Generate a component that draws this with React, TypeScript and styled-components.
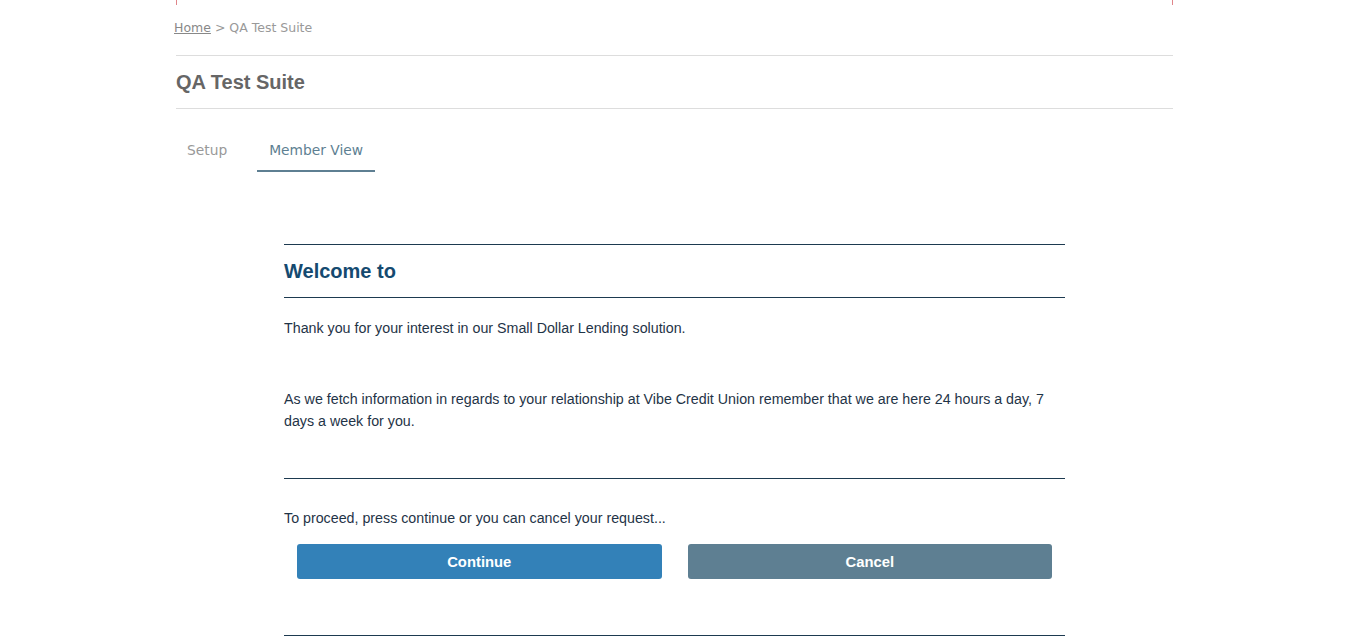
import React from "react";
import styled, { createGlobalStyle } from "styled-components";

const GlobalStyle = createGlobalStyle`
  html, body {
    margin: 0;
    padding: 0;
    background: #fff;
  }
  body {
    font-family: "Liberation Sans", Arial, sans-serif;
  }
`;

const Frame = styled.div`
  width: 1349px;
  min-height: 643px;
`;

const Container = styled.div`
  width: 997px;
  margin: 0 auto;
`;

const TopEdge = styled.div`
  height: 5px;
  border-left: 1px solid #e0858a;
  border-right: 1px solid #e0858a;
`;

const Breadcrumb = styled.div`
  font-family: "DejaVu Sans", Verdana, sans-serif;
  font-size: 12.5px;
  line-height: 18px;
  color: #999;
  padding: 14px 0 18px;
  margin-left: -2px;

  a {
    color: #888;
    text-decoration: underline;
  }
`;

const TitleBar = styled.div`
  border-top: 1px solid #ddd;
  border-bottom: 1px solid #ddd;
  height: 52px;
  display: flex;
  align-items: center;
`;

const Title = styled.h1`
  margin: 0;
  font-size: 20px;
  font-weight: bold;
  color: #666;
  line-height: 24px;
`;

const Tabs = styled.div`
  display: flex;
  gap: 18px;
  margin-top: 21px;
  margin-left: -1px;
`;

const Tab = styled.div<{ $active?: boolean }>`
  font-family: "DejaVu Sans", Verdana, sans-serif;
  font-size: 13.8px;
  line-height: 18px;
  padding: 11px 12px 11px;
  color: ${({ $active }) => ($active ? "#5e7f92" : "#999")};
  border-bottom: 2px solid ${({ $active }) => ($active ? "#5e7f92" : "transparent")};
`;

const Panel = styled.div`
  width: 781px;
  margin: 72px auto 0;
  color: #1f3447;
  font-size: 14.25px;
  line-height: 22px;
`;

const HeadingBlock = styled.div`
  border-top: 1px solid #1d3a50;
  border-bottom: 1px solid #1d3a50;
  height: 52px;
  display: flex;
  align-items: center;
`;

const Heading = styled.h2`
  margin: 0;
  font-size: 20px;
  font-weight: bold;
  color: #154a70;
  line-height: 24px;
`;

const Para = styled.p<{ $top: number }>`
  margin: ${({ $top }) => $top}px 0 0;
`;

const Divider = styled.div<{ $top: number }>`
  border-top: 1px solid #1d3a50;
  margin-top: ${({ $top }) => $top}px;
`;

const Actions = styled.div`
  display: grid;
  grid-template-columns: 1fr 1fr;
  margin-top: 15px;
`;

const Cell = styled.div`
  padding: 0 13px;
`;

const Button = styled.button<{ $variant: "primary" | "secondary" }>`
  width: 100%;
  height: 35px;
  padding: 1px 0 0;
  border: none;
  border-radius: 3px;
  background: ${({ $variant }) => ($variant === "primary" ? "#3381b8" : "#5e7f92")};
  color: #fff;
  font-family: "Liberation Sans", Arial, sans-serif;
  font-size: 14.8px;
  font-weight: bold;
  cursor: pointer;
`;

export default function App() {
  return (
    <Frame>
      <GlobalStyle />
      <Container>
        <TopEdge />
        <Breadcrumb>
          <a>Home</a> &gt; QA Test Suite
        </Breadcrumb>
        <TitleBar>
          <Title>QA Test Suite</Title>
        </TitleBar>
        <Tabs>
          <Tab>Setup</Tab>
          <Tab $active>Member View</Tab>
        </Tabs>
        <Panel>
          <HeadingBlock>
            <Heading>Welcome to</Heading>
          </HeadingBlock>
          <Para $top={19}>Thank you for your interest in our Small Dollar Lending solution.</Para>
          <Para $top={49}>
            As we fetch information in regards to your relationship at Vibe Credit Union remember that we are here 24
            hours a day, 7 days a week for you.
          </Para>
          <Divider $top={46} />
          <Para $top={28}>To proceed, press continue or you can cancel your request...</Para>
          <Actions>
            <Cell>
              <Button $variant="primary">Continue</Button>
            </Cell>
            <Cell>
              <Button $variant="secondary">Cancel</Button>
            </Cell>
          </Actions>
          <Divider $top={56} />
        </Panel>
      </Container>
    </Frame>
  );
}
